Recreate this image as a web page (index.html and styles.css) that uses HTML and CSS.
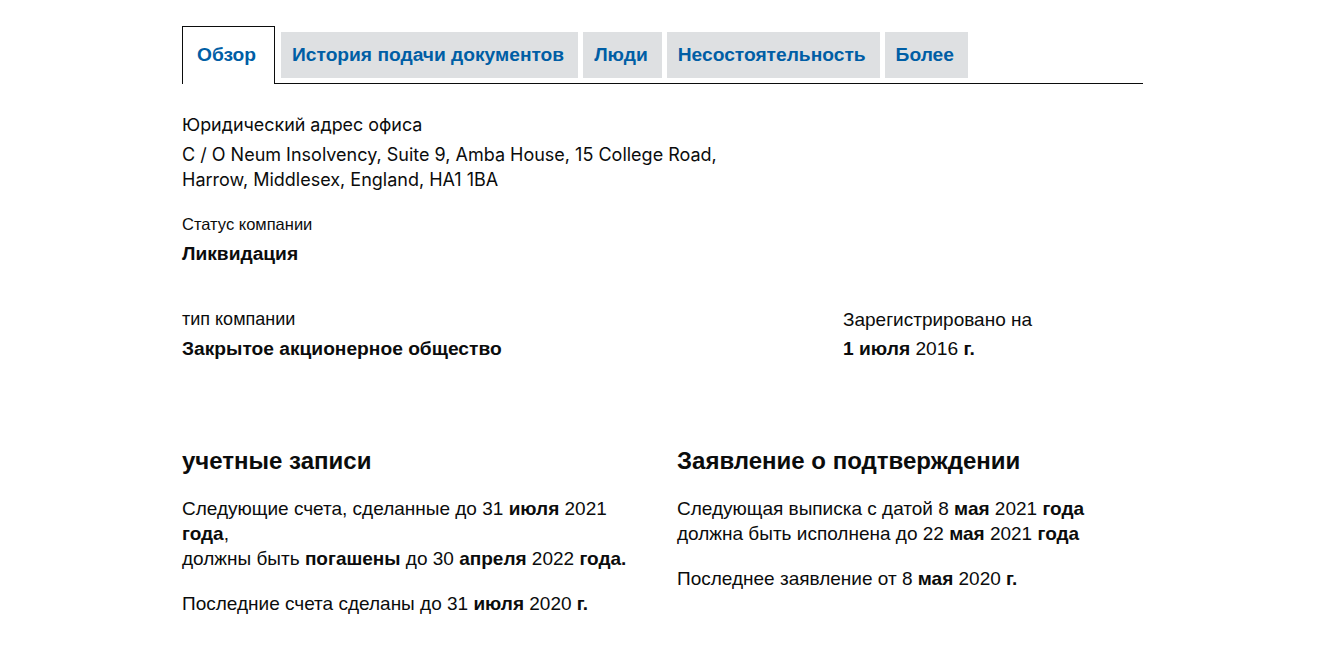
FILE: index.html
```html
<!DOCTYPE html>
<html lang="ru">
<head>
<meta charset="utf-8">
<title>Обзор</title>
<link rel="stylesheet" href="styles.css">
</head>
<body>
<div class="page">
  <nav class="tabs">
    <a class="tab tab-active" href="#">Обзор</a>
    <a class="tab" href="#">История подачи документов</a>
    <a class="tab" href="#">Люди</a>
    <a class="tab" href="#">Несостоятельность</a>
    <a class="tab" href="#">Более</a>
  </nav>

  <section class="overview">
    <div class="field">
      <div class="label label-alt">Юридический адрес офиса</div>
      <div class="address">C / O Neum Insolvency, Suite 9, Amba House, 15 College Road,<br>Harrow, Middlesex, England, HA1 1BA</div>
    </div>
    <div class="field">
      <div class="label label-small">Статус компании</div>
      <div class="value">Ликвидация</div>
    </div>
    <div class="field-row">
      <div class="field">
        <div class="label label-mid">тип компании</div>
        <div class="value">Закрытое акционерное общество</div>
      </div>
      <div class="field">
        <div class="label label-large">Зарегистрировано на</div>
        <div class="value">1 июля <span class="num">2016</span> г.</div>
      </div>
    </div>
  </section>

  <section class="columns">
    <div class="column">
      <h2 class="heading">учетные записи</h2>
      <p class="text">Следующие счета, сделанные до 31 <b>июля</b> 2021 <b>года</b>,<br>должны быть <b>погашены</b> до 30 <b>апреля</b> 2022 <b>года.</b></p>
      <p class="text">Последние счета сделаны до 31 <b>июля</b> 2020 <b>г.</b></p>
    </div>
    <div class="column">
      <h2 class="heading">Заявление о подтверждении</h2>
      <p class="text">Следующая выписка с датой 8 <b>мая</b> 2021 <b>года</b><br>должна быть исполнена до 22 <b>мая</b> 2021 <b>года</b></p>
      <p class="text">Последнее заявление от 8 <b>мая</b> 2020 <b>г.</b></p>
    </div>
  </section>
</div>
</body>
</html>
```

FILE: styles.css
```css
html, body {
  margin: 0;
  padding: 0;
  background: #ffffff;
}

body {
  font-family: "Liberation Sans", Arial, sans-serif;
  color: #0b0c0c;
  font-size: 16px;
  line-height: 25px;
}

.page {
  width: 961px;
  margin: 0 auto;
  padding-top: 27px;
}

.tabs {
  display: flex;
  align-items: flex-end;
  gap: 5px;
  border-bottom: 1px solid #0b0c0c;
  height: 57px;
  box-sizing: border-box;
}

.tab {
  display: block;
  font-weight: bold;
  font-size: 19.2px;
  line-height: 46px;
  height: 46px;
  padding: 0 14px 0 11px;
  margin-bottom: 5px;
  background: #dee0e2;
  color: #005ea5;
  text-decoration: none;
}

.tab-active {
  background: #ffffff;
  border: 1px solid #0b0c0c;
  border-bottom: 0;
  height: 57px;
  line-height: 56px;
  padding: 0 18px 0 14px;
  margin-bottom: -1px;
  margin-right: 1px;
}

.overview {
  padding-top: 28px;
}

.field {
  margin-bottom: 20px;
}

.label {
  margin-bottom: 4px;
}

.label-alt {
  font-family: Inter, "Liberation Sans", sans-serif;
  font-size: 17.9px;
  margin-bottom: 5px;
}

.label-small {
  font-size: 16.5px;
}

.label-mid {
  font-size: 18px;
}

.label-large {
  font-size: 19px;
}

.address {
  font-family: Inter, "Liberation Sans", sans-serif;
  font-size: 18px;
}

.value {
  font-weight: bold;
  font-size: 19.2px;
}

.num {
  font-weight: normal;
}

.field-row {
  display: grid;
  grid-template-columns: 661px 1fr;
  margin-top: 41px;
}

.columns {
  display: grid;
  grid-template-columns: 465px 465px;
  column-gap: 30px;
  margin-top: 65px;
}

.heading {
  margin: 0 0 20px;
  font-size: 24px;
  line-height: 30px;
  font-weight: bold;
}

.text {
  margin: 0 0 20px;
  font-size: 19px;
}
```
